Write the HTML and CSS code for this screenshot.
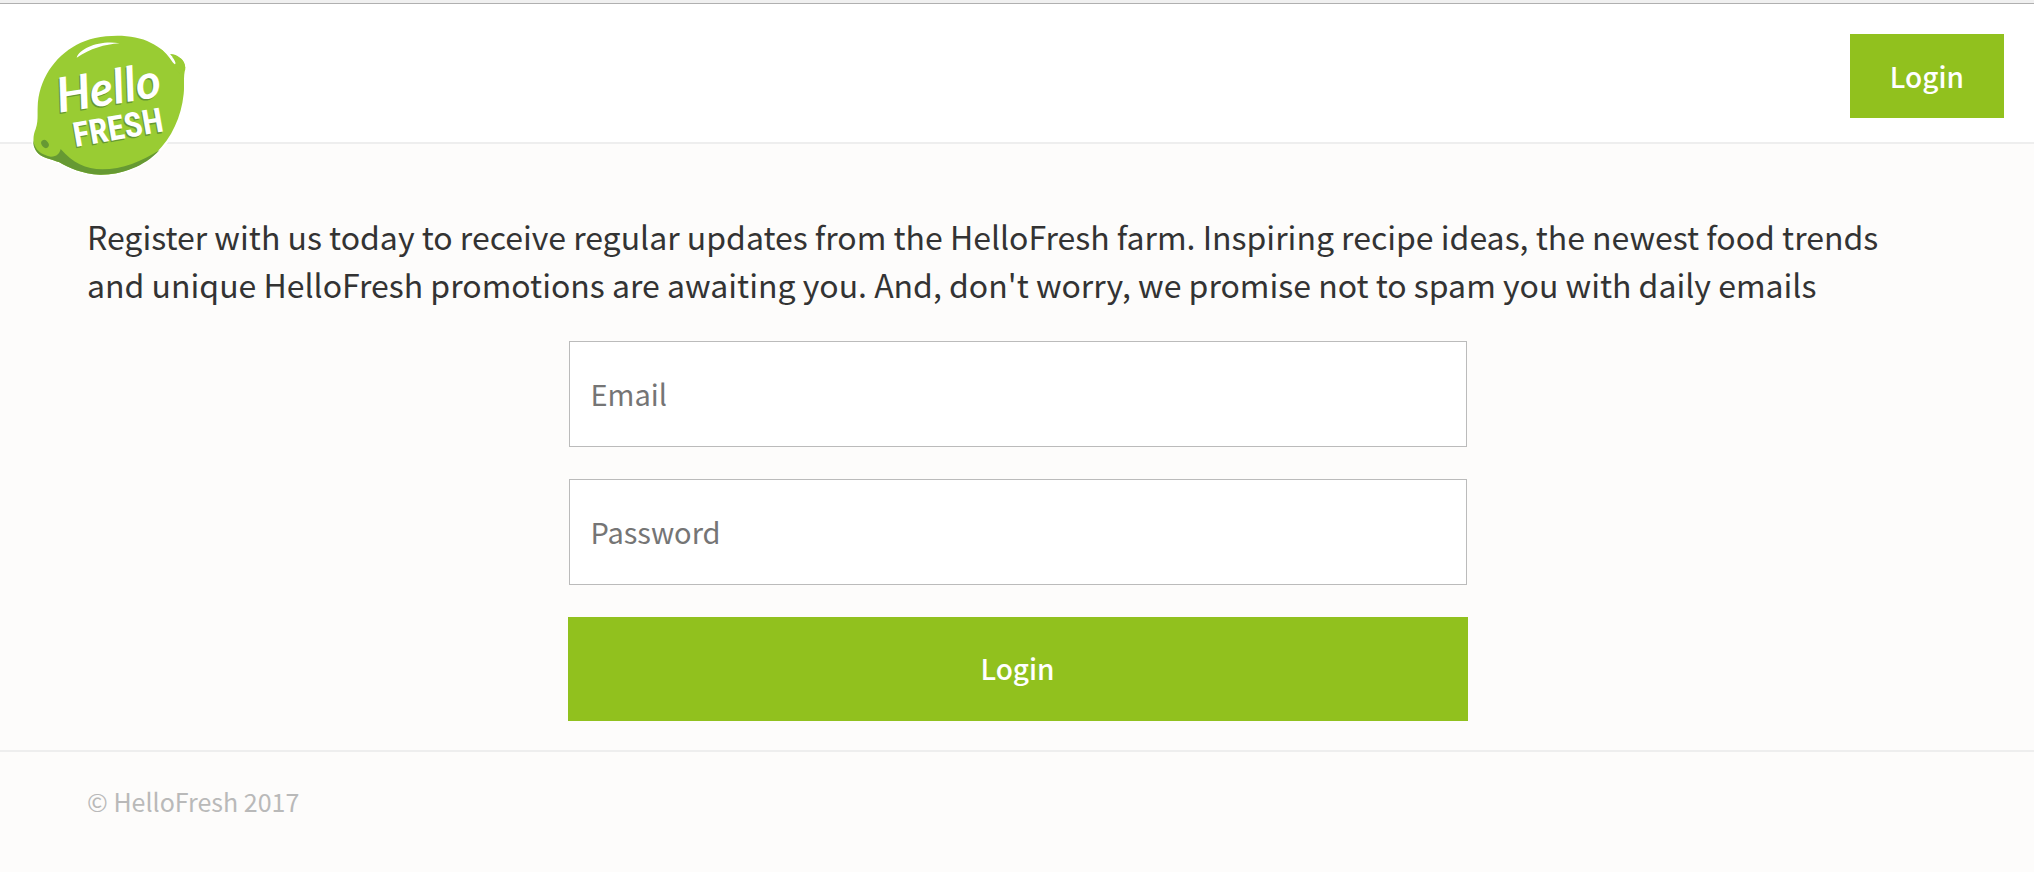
FILE: index.html
```html
<!DOCTYPE html>
<html lang="en">
<head>
<meta charset="utf-8">
<meta name="viewport" content="width=device-width, initial-scale=1">
<title>HelloFresh</title>
<link rel="stylesheet" href="styles.css">
</head>
<body>
<header class="header">
  <a class="logo" href="#" aria-label="HelloFresh home">
    <svg class="logo-art" viewBox="93 102 471 429" aria-hidden="true">
      <path class="lemon-outline" d="M113 322C115 236 166 168 230 132C296 100 392 99 452 128C474 139 494 152 509 163C535 160 556 178 556 207C549 228 554 258 551 282C544 350 515 414 469 458C420 503 356 525 300 524C247 523 204 502 178 487C153 476 122 474 108 452C97 430 99 405 107 387C115 362 112 348 113 322Z"/>
      <path class="lemon" d="M113 322C115 240 163 170 230 134C286 103 392 96 452 128C480 142 503 160 514 172C540 164 556 180 556 207C549 228 554 258 551 282C544 350 515 414 469 458C420 503 356 525 300 524C247 523 204 502 178 487C153 476 122 474 108 452C97 430 99 405 107 387C115 362 112 348 113 322Z"/>
      <path class="lemon" d="M508 162C530 160 553 178 556 203L540 220L520 200L528 190C529 180 520 172 508 162Z"/>
      <path class="shade" d="M100 421C103 451 126 466 153 470C171 470 178 461 182 447C218 488 257 508 307 508C367 508 426 484 479 450C433 501 361 525 300 524C247 523 204 502 178 487C153 476 122 474 108 452C101 442 99 431 100 421Z"/>
      <ellipse class="shade" cx="135" cy="432" rx="10" ry="13" transform="rotate(-38 135 432)"/>
      <path class="shine" d="M230 173C240 143 302 120 359 130C313 133 271 146 230 173Z"/>
      <path class="shine" d="M479 142C498 150 510 160 516 170C524 180 528 188 526 192Q523 194 518 187C507 169 492 154 479 142Z"/>
      <g transform="rotate(-9 180 340)">
        <text class="hello hello-shadow" x="173" y="342">Hello</text>
        <text class="hello" x="177" y="338">Hello</text>
      </g>
      <g transform="rotate(-10 232 442)">
        <text class="fresh fresh-shadow" x="222" y="444">FRESH</text>
        <text class="fresh" x="226" y="440">FRESH</text>
      </g>
    </svg>
  </a>
  <button class="button button-header" type="button">Login</button>
</header>
<main class="main">
  <p class="intro">Register with us today to receive regular updates from the HelloFresh farm. Inspiring recipe ideas, the newest food trends and unique HelloFresh promotions are awaiting you. And, don't worry, we promise not to spam you with daily emails</p>
  <form class="form">
    <input class="field" type="email" placeholder="Email" aria-label="Email">
    <input class="field" type="password" placeholder="Password" aria-label="Password">
    <button class="button button-submit" type="submit">Login</button>
  </form>
</main>
<footer class="footer">© HelloFresh 2017</footer>
</body>
</html>
```

FILE: styles.css
```css
* {
  box-sizing: border-box;
}

body {
  margin: 0;
  min-height: 100vh;
  border-top: 3px solid #f0f0f0;
  background: #fdfcfb;
  color: #333;
  font-family: "Noto Sans CJK SC", "Noto Sans", sans-serif;
}

.header {
  position: relative;
  display: flex;
  justify-content: flex-end;
  padding: 30px 30px 24px;
  border-top: 1px solid #b0b0b0;
  border-bottom: 2px solid #eee;
  background: #fff;
}

.logo {
  position: absolute;
  top: 30px;
  left: 31px;
}

.logo-art {
  display: block;
  width: 157px;
  height: 143px;
}

.lemon-outline {
  fill: #fff;
  stroke: #fff;
  stroke-width: 12;
}

.lemon {
  fill: #9c3;
}

.shade {
  fill: #693;
}

.shine {
  fill: #fff;
}

.hello {
  fill: #fff;
  font: italic 700 144px Lato, sans-serif;
}

.fresh {
  fill: #fff;
  font: 700 102px "Roboto Condensed", "Noto Sans CJK SC", sans-serif;
}

.hello-shadow,
.fresh-shadow {
  fill: #693;
}

.button {
  border: 0;
  background: #91c11e;
  color: #fff;
  font-family: inherit;
  font-size: 28px;
  font-weight: 500;
  line-height: 44px;
  cursor: pointer;
}

.button-header {
  padding: 20px 40px;
}

.button-submit {
  padding: 29px 30px 31px;
}

.main {
  padding: 68px 86px 29px 87px;
}

.intro {
  margin: 0 0 33px;
  padding-right: 32px;
  font-size: 32px;
  line-height: 48px;
}

.form {
  display: flex;
  flex-direction: column;
  gap: 32px;
  max-width: 900px;
  margin: 0 auto;
}

.field {
  height: 106px;
  margin: 0 1px;
  padding: 0 21px 2px;
  border: 1px solid #bbb;
  border-radius: 0;
  background: #fff;
  color: #333;
  font-family: inherit;
  font-size: 29px;
}

.field::placeholder {
  color: #757575;
  opacity: 1;
}

.footer {
  padding: 29px 87px;
  border-top: 2px solid #eee;
  color: #b9b9b9;
  font-size: 25px;
  line-height: 40px;
}
```
